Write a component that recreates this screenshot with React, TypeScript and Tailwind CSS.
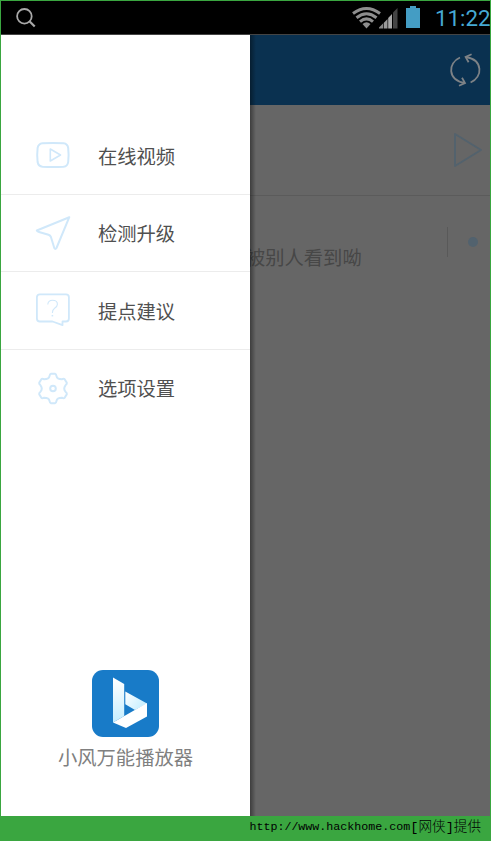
import React from 'react'

const VideoIcon = () => (
    <svg className="h-10 w-10" viewBox="0 0 40 40" fill="none" stroke="#d0e8fa" strokeWidth="2" strokeLinejoin="round">
        <path d="M9.5 8.2Q20 7.6 30.5 8.2Q34.6 8.6 35.2 13Q36 20 35.2 27Q34.6 31.4 30.5 31.8Q20 32.4 9.5 31.8Q5.4 31.4 4.6 27Q3.8 20 4.6 13Q5.4 8.6 9.5 8.2Z" />
        <path d="M17.3 14L27.5 20L17.3 26Z" strokeWidth="1.6" />
    </svg>
)

const PlaneIcon = () => (
    <svg className="h-10 w-10" viewBox="0 0 40 40" fill="none" stroke="#d0e8fa" strokeWidth="2" strokeLinejoin="round">
        <path d="M36.3 4.2L3.8 17.5Q4 18.4 6 19L15.5 21.8Q17.3 22.4 18 24.2L21.3 35Q22.3 36.8 23.5 35Z" />
    </svg>
)

const SuggestIcon = () => (
    <svg className="h-10 w-10" viewBox="0 0 40 40" fill="none" stroke="#d0e8fa" strokeWidth="1.8" strokeLinejoin="round">
        <path d="M6.8 4.4H33Q35.9 4.4 35.9 7.2V28.5Q35.9 31.5 33 31.5H29.5V35.2L19.5 31.5H6.8Q3.9 31.5 3.9 28.5V7.2Q3.9 4.4 6.8 4.4Z" />
        <path d="M14.8 14.5Q15 10.3 19.6 10.3Q24.4 10.3 24.4 14.3Q24.4 16.5 21.6 18.3Q19.4 19.8 19.4 23" strokeWidth="1.1" />
        <path d="M18.6 25.7H20.2" strokeWidth="1.5" />
    </svg>
)

const GearIcon = () => (
    <svg className="h-10 w-10" viewBox="-20 -20.5 40 40" fill="none" stroke="#d0e8fa" strokeWidth="2" strokeLinejoin="round">
        <path d="M-2 -14.8H2Q3.2 -14.6 3.5 -12.4Q4 -9.3 8.9 -9.3Q10.9 -10.1 11.8 -9.1L13.8 -5.7Q14.2 -4.5 12.5 -3.2Q10 0 12.5 3.2Q14.2 4.5 13.8 5.7L11.8 9.1Q10.9 10.1 8.9 9.3Q4 9.3 3.5 12.4Q3.2 14.6 2 14.8H-2Q-3.2 14.6 -3.5 12.4Q-4 9.3 -8.9 9.3Q-10.9 10.1 -11.8 9.1L-13.8 5.7Q-14.2 4.5 -12.5 3.2Q-10 0 -12.5 -3.2Q-14.2 -4.5 -13.8 -5.7L-11.8 -9.1Q-10.9 -10.1 -8.9 -9.3Q-4 -9.3 -3.5 -12.4Q-3.2 -14.6 -2 -14.8Z" />
        <circle r="2.8" />
    </svg>
)

const App = () => {
    return (
        <div className="flex h-[841px] w-[491px] flex-col overflow-hidden border border-b-0 border-[#3aa640] font-['Noto_Sans_CJK_SC',sans-serif]">
            {/* Status bar */}
            <div className="flex h-[34px] shrink-0 items-center justify-between border-b border-[#444] bg-black pl-[15px]">
                <svg className="h-5 w-5" viewBox="0 0 20 20" fill="none" stroke="#a9a9a9" strokeWidth="1.8">
                    <circle cx="8.4" cy="8.3" r="7.3" />
                    <path d="M13.7 13.5L18.7 18.5" strokeWidth="2.2" />
                </svg>
                <div className="flex items-center">
                    <svg className="h-6 w-[46px]" viewBox="0 0 46 24" fill="none">
                        <g stroke="#8e8e8e" strokeWidth="3">
                            <path d="M1 7.5Q14.5 -2.5 28 7.5" />
                            <path d="M4.5 11.7Q14.5 3.8 24.5 11.7" />
                            <path d="M8 15.7Q14.5 10 21 15.7" />
                        </g>
                        <path d="M10.5 18Q14.5 14.5 18.5 18L14.5 22.5Z" fill="#8e8e8e" />
                        <path d="M27 22.5V21.5L31 17.5V22.5Z" fill="#888" />
                        <path d="M31.7 22.5V17L35.5 13V22.5Z" fill="#999" />
                        <path d="M36.2 22.5V12L40 8V22.5Z" fill="#aaa" />
                        <path d="M41 22.5V6.5L45.5 2V22.5Z" fill="#444" />
                    </svg>
                    <svg className="mb-px ml-2 h-[22px] w-3.5" viewBox="0 0 14 22" fill="#449dc4">
                        <path d="M4 0H10V2H14V22H0V2H4Z" />
                    </svg>
                    <span className="ml-[15px] w-[55px] font-[Roboto,sans-serif] text-[22.3px] leading-[32px] whitespace-nowrap text-[#46a9d3]">11:22</span>
                </div>
            </div>

            <div className="flex min-h-0 flex-1">
                {/* Side menu */}
                <div className="relative z-10 flex w-[249px] shrink-0 flex-col bg-white pt-[82px] text-[19.3px] text-[#505050]">
                    <div className="flex h-[77.5px] items-center gap-[25px] border-b border-[#ececec] pl-8">
                        <VideoIcon />
                        <span className="pt-0.5">在线视频</span>
                    </div>
                    <div className="flex h-[77.5px] items-center gap-[25px] border-b border-[#ececec] pl-8">
                        <PlaneIcon />
                        <span className="pt-0.5">检测升级</span>
                    </div>
                    <div className="flex h-[77.5px] items-center gap-[25px] border-b border-[#ececec] pl-8">
                        <SuggestIcon />
                        <span className="pt-0.5">提点建议</span>
                    </div>
                    <div className="flex h-[77.5px] items-center gap-[25px] pl-8">
                        <GearIcon />
                        <span>选项设置</span>
                    </div>

                    {/* App logo */}
                    <div className="mt-auto flex flex-col items-center pb-11">
                        <svg className="h-[67px] w-[67px]" viewBox="0 0 67 67">
                            <defs>
                                <linearGradient id="stem" x1="0" y1="0" x2="0" y2="1">
                                    <stop offset="0" stopColor="#fff" />
                                    <stop offset="1" stopColor="#c5eeff" />
                                </linearGradient>
                                <linearGradient id="fold" x1="0" y1="0" x2="1" y2="0.6">
                                    <stop offset="0" stopColor="#fff" />
                                    <stop offset="1" stopColor="#c5eeff" />
                                </linearGradient>
                            </defs>
                            <rect width="67" height="67" rx="11" fill="#187bc8" />
                            <path d="M21 7.5L32.2 14V46L21 52.5Z" fill="url(#stem)" />
                            <path d="M33.3 21.5L55 33.5L43 40L33.3 34.3Z" fill="url(#fold)" />
                            <path d="M55 33V46.5L34 58L21 52.5Z" fill="#fff" />
                        </svg>
                        <span className="mt-[6px] leading-[29px] text-[#808080]">小风万能播放器</span>
                    </div>
                </div>

                {/* Dimmed page */}
                <div className="relative min-w-0 flex-1 bg-[#666]">
                    <div className="absolute inset-y-0 left-0 z-10 w-[6px] bg-gradient-to-r from-black/40 to-transparent"></div>
                    <div className="flex h-[70px] items-center justify-end bg-[#0a3150] pr-2">
                        <svg className="h-9 w-9" viewBox="0 0 36 36" fill="none" stroke="#7d8286" strokeWidth="1.8">
                            <path d="M14 5.5C1.5 11 1.5 28 18.5 31" />
                            <path d="M13 33.7L19 31L16 25.7" />
                            <path d="M24.6 30.5C37.1 25 37.1 8 20.1 5" />
                            <path d="M25.6 2.3L19.6 5L22.6 10.3" />
                        </svg>
                    </div>
                    <div className="flex h-[91px] items-center justify-end border-b border-[#5b5b5b] pr-[7px]">
                        <svg className="h-9 w-[30px]" viewBox="0 0 30 36" fill="none" stroke="#53626d" strokeWidth="2" strokeLinejoin="round">
                            <path d="M2 2V34L28 18Z" />
                        </svg>
                    </div>
                    <div className="flex h-[84px] items-center justify-between pr-3">
                        <span className="-ml-1 pt-[38px] text-[19.3px] leading-[30px] text-[#474747]">被别人看到呦</span>
                        <div className="flex items-center gap-5 pt-2">
                            <div className="h-[30px] w-px bg-[#595959]"></div>
                            <div className="h-2.5 w-2.5 rounded-full bg-[#52626e]"></div>
                        </div>
                    </div>
                </div>
            </div>

            {/* Footer */}
            <div className="flex h-[25px] shrink-0 items-center justify-end bg-[#3aa640] pr-[9px] pb-px text-black">
                <span className="font-['Liberation_Mono',monospace] text-[11.67px]">http://www.hackhome.com</span>
                <span className="font-['Liberation_Mono','Noto_Sans_CJK_SC',monospace] text-[13.6px] font-light">[网侠]提供</span>
            </div>
        </div>
    )
}

export default App
